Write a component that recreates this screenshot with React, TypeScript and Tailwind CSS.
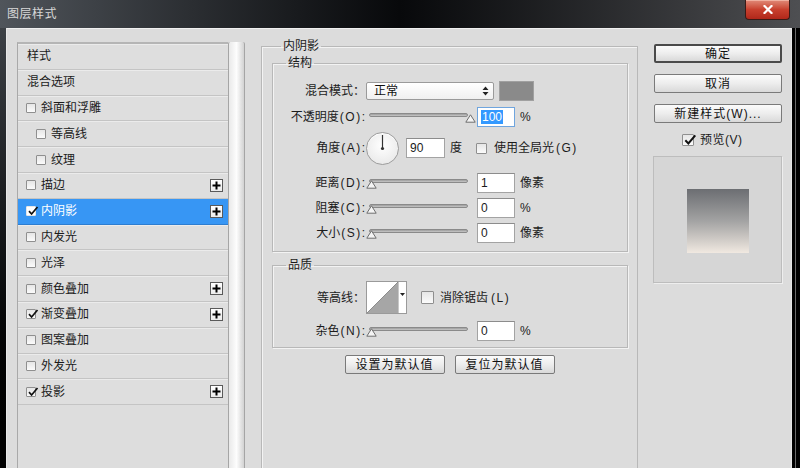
import React from "react";

const FF = "[font-family:'Liberation_Sans','Noto_Sans_CJK_SC',sans-serif]";

function Check({ checked = false, size = 10, light = false }: { checked?: boolean; size?: number; light?: boolean }) {
  return (
    <span
      className={`relative inline-flex shrink-0 items-center justify-center border rounded-[1px] ${
        light ? "border-[#e6e6e6] bg-white" : "border-[#8f8f8f] bg-gradient-to-b from-[#e6e6e6] to-[#fbfbfb]"
      }`}
      style={{ width: size, height: size }}
    >
      {checked && (
        <svg width={size + 2} height={size + 2} viewBox="0 0 12 12" className="absolute left-[0px] -top-[2px]">
          <path d="M2 6.2 L4.6 9 L10.5 2" stroke="#111" strokeWidth="1.7" fill="none" />
        </svg>
      )}
    </span>
  );
}

function Plus() {
  return (
    <span className="inline-flex h-[13px] w-[13px] items-center justify-center border border-[#5a5a5a] bg-gradient-to-b from-white to-[#ececec]">
      <svg width="9" height="9" viewBox="0 0 9 9">
        <path d="M4.5 0.5v8M0.5 4.5h8" stroke="#000" strokeWidth="2" />
      </svg>
    </span>
  );
}

type Row = { label: string; cb?: boolean | null; indent?: boolean; plus?: boolean; sel?: boolean };
const rows: Row[] = [
  { label: "样式", cb: null },
  { label: "混合选项", cb: null },
  { label: "斜面和浮雕", cb: false },
  { label: "等高线", cb: false, indent: true },
  { label: "纹理", cb: false, indent: true },
  { label: "描边", cb: false, plus: true },
  { label: "内阴影", cb: true, plus: true, sel: true },
  { label: "内发光", cb: false },
  { label: "光泽", cb: false },
  { label: "颜色叠加", cb: false, plus: true },
  { label: "渐变叠加", cb: true, plus: true },
  { label: "图案叠加", cb: false },
  { label: "外发光", cb: false },
  { label: "投影", cb: true, plus: true },
];

function Label({ cjk, key2, colon = ":" }: { cjk: string; key2?: string; colon?: string }) {
  return (
    <span className="w-[92px] shrink-0 text-right text-[12px] leading-[20px] text-[#1b1b1b]">
      {cjk}
      {key2 && <span className="tracking-[1.5px] pl-[1px]">({key2})</span>}
      {colon}
    </span>
  );
}

function Slider({ value }: { value: number }) {
  return (
    <div className="relative ml-[1px] h-[20px] w-[110px] shrink-0">
      <div className="absolute left-[3px] top-[6px] h-[4px] w-[99px] rounded-[2px] border border-[#8a8a8a] bg-gradient-to-b from-[#9c9c9c] to-[#c8c8c8]" />
      <svg
        width="11"
        height="9"
        viewBox="0 0 11 9"
        className="absolute top-[7px]"
        style={{ left: (value / 100) * 99 }}
      >
        <path d="M5.5 0.8 L10.2 8.2 L0.8 8.2 Z" fill="#f4f4f4" stroke="#6e6e6e" strokeWidth="1" />
      </svg>
    </div>
  );
}

function NumInput({ v, sel = false, w = 38 }: { v: string; sel?: boolean; w?: number }) {
  return (
    <div
      className={`flex h-[20px] shrink-0 items-center bg-white pl-[3px] text-[12px] border ${
        sel ? "border-[#6fa5de]" : "border-[#a3a3a3] border-t-[#8c8c8c]"
      }`}
      style={{ width: w }}
    >
      {sel ? <span className="bg-[#3399ff] px-[1px] leading-[14px] text-white">{v}</span> : <span className="text-[#1b1b1b]">{v}</span>}
    </div>
  );
}

function Btn({ children, w, primary = false }: { children: React.ReactNode; w: number; primary?: boolean }) {
  return (
    <div
      className={`flex h-[19px] shrink-0 items-center justify-center rounded-[2px] bg-gradient-to-b from-[#fbfbfb] via-[#ededed] to-[#d9d9d9] text-[12px] tracking-[1px] text-[#111] ${
        primary ? "border-[2px] border-[#4a4a4a]" : "border border-[#7a7a7a]"
      }`}
      style={{ width: w }}
    >
      {children}
    </div>
  );
}

export default function App() {
  return (
    <div className={`h-[468px] w-[800px] overflow-hidden bg-black ${FF}`}>
      {/* Title bar */}
      <div className="relative flex h-[28px] items-center bg-gradient-to-r from-[#50555b] via-[#08090b] to-[#4e4f52] pl-[7px]">
        <span className="text-[12px] tracking-[0.5px] text-[#d8d8d8]">图层样式</span>
        <div className="absolute right-[10px] top-0 flex h-[20px] w-[45px] items-center justify-center rounded-b-[4px] border border-t-0 border-[#3a1a16] bg-gradient-to-b from-[#e08a78] via-[#c8402e] to-[#b0271a] shadow-[inset_0_1px_0_#f0b0a0]">
          <svg width="10" height="9" viewBox="0 0 10 9">
            <path d="M1.5 1 L8.5 8 M8.5 1 L1.5 8" stroke="#ffffff" strokeWidth="2.2" strokeLinecap="square" />
          </svg>
        </div>
      </div>

      <div className="flex h-[440px]">
        {/* left frame */}
        <div className="flex w-[7px] shrink-0 bg-gradient-to-b from-[#3d4146] to-[#000]">
          <div className="ml-[6px] w-[1px] bg-[#e8e8e8]" />
        </div>

        {/* client */}
        <div className="flex flex-1 items-start border-t border-[#f0f0f0] bg-[#dcdcdc]">
          {/* list */}
          <div className="ml-[10px] mt-[13px] flex h-[430px] shrink-0">
            <div className="w-[211px] border-l border-t-2 border-[#a9a9a9] border-t-[#b5b5b5] bg-[#dddddd]">
              {rows.map((r) => (
                <div
                  key={r.label}
                  className={`flex h-[25.8px] items-center border-b pr-[5px] text-[12px] ${
                    r.sel
                      ? "bg-[#3796f4] border-[#2d7dd0] text-white"
                      : "bg-[#dedede] border-[#c4c4c4] shadow-[inset_0_1px_0_#ebebeb] text-[#1b1b1b]"
                  } ${r.cb === null || r.cb === undefined ? "pl-[9px]" : r.indent ? "pl-[18px]" : "pl-[8px]"}`}
                >
                  {r.cb !== null && r.cb !== undefined && (
                    <span className="mr-[5px] flex">
                      <Check checked={r.cb} light={r.sel} />
                    </span>
                  )}
                  <span className="flex-1">{r.label}</span>
                  {r.plus && <Plus />}
                </div>
              ))}
            </div>
            <div className="w-[17px] rounded-t-[2px] border-x border-[#a5a5a5] bg-gradient-to-r from-[#e9e9e9] via-[#fdfdfd] to-[#d2d2d2]" />
          </div>

          {/* main settings */}
          <fieldset className="ml-[16px] mt-[9px] h-[460px] w-[377px] shrink-0 border border-[#b8b8b8] pl-[10px] pr-[9px] shadow-[inset_1px_1px_0_#f3f3f3]">
            <legend className="ml-[9px] px-[2px] text-[12px] leading-[16px] text-[#1b1b1b]">内阴影</legend>

            <fieldset className="mt-[1px] border border-[#b8b8b8] pb-[8px] pt-[10px] shadow-[inset_1px_1px_0_#f3f3f3,1px_1px_0_#f3f3f3]">
              <legend className="ml-[13px] px-[2px] text-[12px] leading-[16px] text-[#1b1b1b]">结构</legend>
              {/* blend mode */}
              <div className="flex h-[20px] items-center">
                <Label cjk="混合模式" colon="：" />
                <div className="ml-[1px] flex h-[18px] w-[128px] shrink-0 items-center justify-between rounded-[2px] border border-[#9a9a9a] bg-gradient-to-b from-white to-[#f0f0f0] pl-[7px] pr-[4px] text-[12px] text-[#111]">
                  <span>正常</span>
                  <svg width="7" height="10" viewBox="0 0 7 10">
                    <path d="M3.5 0.5 L6.5 4 L0.5 4 Z M0.5 6 L6.5 6 L3.5 9.5 Z" fill="#222" />
                  </svg>
                </div>
                <div className="ml-[5px] h-[20px] w-[35px] shrink-0 border border-[#a0a0a0] bg-[#8a8a8a]" />
              </div>
              {/* opacity */}
              <div className="mt-[6px] flex h-[20px] items-center">
                <Label cjk="不透明度" key2="O" />
                <Slider value={100} />
                <span className="ml-[1px] flex"><NumInput v="100" sel /></span>
                <span className="ml-[5px] text-[12px] text-[#1b1b1b]">%</span>
              </div>
              {/* angle */}
              <div className="mt-[5px] flex h-[32px] items-center">
                <Label cjk="角度" key2="A" />
                <div className="relative ml-[1px] flex h-[33px] w-[33px] shrink-0 items-center justify-center rounded-full border border-[#9c9c9c] bg-[radial-gradient(circle_at_50%_40%,#ffffff,#e4e4e4)] shadow-[inset_0_1px_1px_#ffffff]">
                  <svg width="33" height="33" viewBox="0 0 33 33" className="absolute -left-[1px] -top-[1px]">
                    <line x1="16.5" y1="16.5" x2="16.5" y2="3" stroke="#333" strokeWidth="1.2" />
                    <circle cx="16.5" cy="16.5" r="1.6" fill="#333" />
                  </svg>
                </div>
                <span className="ml-[7px] flex"><NumInput v="90" w={39} /></span>
                <span className="ml-[5px] text-[12px] text-[#1b1b1b]">度</span>
                <span className="ml-[14px] flex"><Check size={11} /></span>
                <span className="ml-[7px] text-[12px] text-[#1b1b1b]">
                  使用全局光<span className="tracking-[1.5px] pl-[2px]">(G)</span>
                </span>
              </div>
              {/* distance */}
              <div className="mt-[9px] flex h-[20px] items-center">
                <Label cjk="距离" key2="D" />
                <Slider value={0} />
                <span className="ml-[1px] flex"><NumInput v="1" /></span>
                <span className="ml-[5px] text-[12px] text-[#1b1b1b]">像素</span>
              </div>
              {/* choke */}
              <div className="mt-[5px] flex h-[20px] items-center">
                <Label cjk="阻塞" key2="C" />
                <Slider value={0} />
                <span className="ml-[1px] flex"><NumInput v="0" /></span>
                <span className="ml-[5px] text-[12px] text-[#1b1b1b]">%</span>
              </div>
              {/* size */}
              <div className="mt-[5px] flex h-[20px] items-center">
                <Label cjk="大小" key2="S" />
                <Slider value={0} />
                <span className="ml-[1px] flex"><NumInput v="0" /></span>
                <span className="ml-[5px] text-[12px] text-[#1b1b1b]">像素</span>
              </div>
            </fieldset>

            <fieldset className="mt-[5px] border border-[#b8b8b8] pb-[6px] pt-[8px] shadow-[inset_1px_1px_0_#f3f3f3,1px_1px_0_#f3f3f3]">
              <legend className="ml-[13px] px-[2px] text-[12px] leading-[16px] text-[#1b1b1b]">品质</legend>
              <div className="flex h-[33px] items-center">
                <Label cjk="等高线" colon="：" />
                <div className="ml-[1px] flex h-[33px] w-[41px] shrink-0 border border-[#9a9a9a] bg-white">
                  <svg width="31" height="31" viewBox="0 0 31 31" className="shrink-0">
                    <path d="M0 31 L31 0 L31 31 Z" fill="#a6a6a6" />
                    <path d="M0 31 L31 0" stroke="#7a7a7a" strokeWidth="0.8" />
                  </svg>
                  <div className="flex flex-1 justify-center border-l border-[#c8c8c8] pt-[11px]">
                    <svg width="5" height="3" viewBox="0 0 5 3">
                      <path d="M0 0 L5 0 L2.5 3 Z" fill="#222" />
                    </svg>
                  </div>
                </div>
                <span className="ml-[14px] flex"><Check size={13} /></span>
                <span className="ml-[6px] text-[12px] text-[#1b1b1b]">
                  消除锯齿<span className="tracking-[1.5px] pl-[3px]">(L)</span>
                </span>
              </div>
              <div className="mt-[7px] flex h-[20px] items-center">
                <Label cjk="杂色" key2="N" />
                <Slider value={0} />
                <span className="ml-[1px] flex"><NumInput v="0" /></span>
                <span className="ml-[5px] text-[12px] text-[#1b1b1b]">%</span>
              </div>
            </fieldset>

            <div className="mt-[7px] flex justify-center gap-[10px] pr-[1px]">
              <Btn w={100}>设置为默认值</Btn>
              <Btn w={100}>复位为默认值</Btn>
            </div>
          </fieldset>

          {/* right column */}
          <div className="ml-[15px] mt-[15px] flex w-[129px] shrink-0 flex-col">
            <div className="ml-[1px] flex"><Btn w={128} primary>确定</Btn></div>
            <div className="ml-[1px] mt-[11px] flex"><Btn w={128}>取消</Btn></div>
            <div className="ml-[1px] mt-[11px] flex"><Btn w={128}>新建样式(W)...</Btn></div>
            <div className="mt-[10px] flex h-[14px] items-center pl-[29px]">
              <Check checked size={12} />
              <span className="ml-[6px] text-[12px] tracking-[0.5px] text-[#1b1b1b]">预览(V)</span>
            </div>
            <div className="mt-[9px] flex h-[127px] w-[129px] items-center justify-center border border-[#bdbdbd] bg-[#d6d6d6] shadow-[1px_1px_0_#eeeeee]">
              <div className="mt-[3px] h-[64px] w-[62px] bg-gradient-to-b from-[#6c6e72] via-[#a3a3a3] to-[#f1e9e1]" />
            </div>
          </div>
        </div>

        {/* right frame */}
        <div className="flex w-[9px] shrink-0 bg-black">
          <div className="w-[1px] bg-[#e6e6e6]" />
          <div className="ml-[3px] w-[1px] bg-[#6a6a6a]" />
        </div>
      </div>
    </div>
  );
}
